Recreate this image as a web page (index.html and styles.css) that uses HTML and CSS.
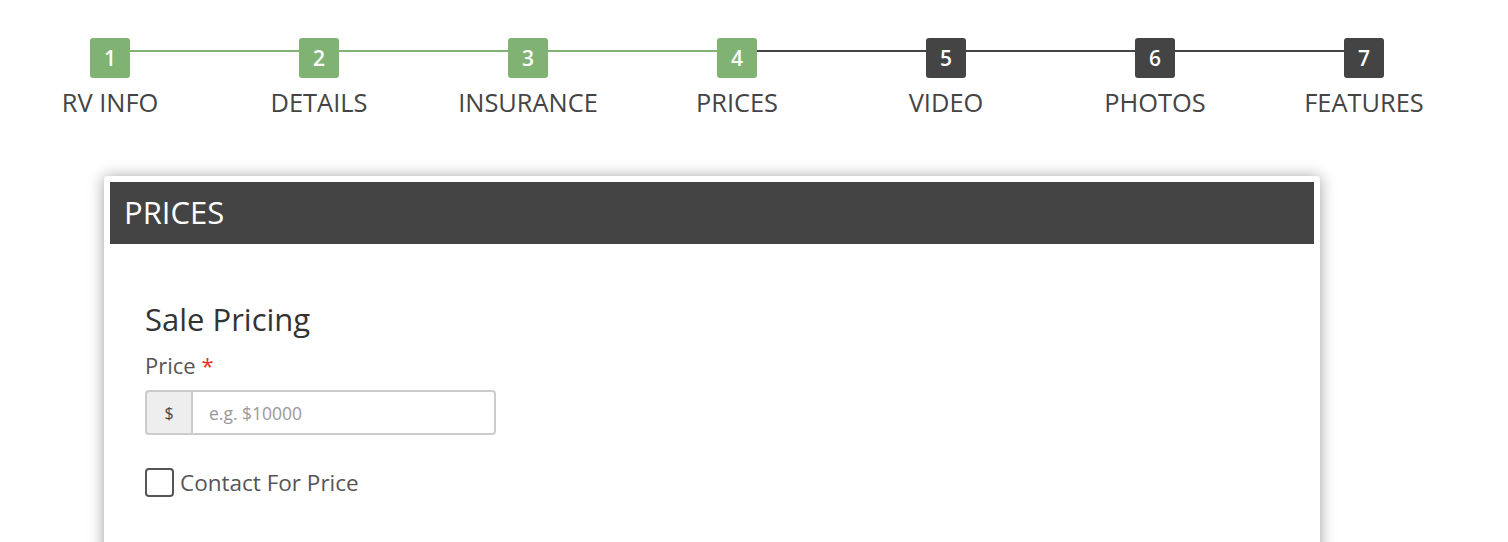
FILE: index.html
```html
<!DOCTYPE html>
<html>
<head>
<meta charset="utf-8">
<link rel="stylesheet" href="styles.css">
</head>
<body>
<div class="steps">
  <div class="step done"><div class="num">1</div><div class="label">RV INFO</div></div>
  <div class="step done"><div class="num">2</div><div class="label">DETAILS</div></div>
  <div class="step done"><div class="num">3</div><div class="label">INSURANCE</div></div>
  <div class="step done current"><div class="num">4</div><div class="label">PRICES</div></div>
  <div class="step"><div class="num">5</div><div class="label">VIDEO</div></div>
  <div class="step"><div class="num">6</div><div class="label">PHOTOS</div></div>
  <div class="step last"><div class="num">7</div><div class="label">FEATURES</div></div>
</div>
<div class="card">
  <div class="card-header">PRICES</div>
  <div class="card-body">
    <h2 class="section-title">Sale Pricing</h2>
    <label class="field-label">Price <span class="req">*</span></label>
    <div class="input-group">
      <span class="addon">$</span>
      <input class="input" type="text" placeholder="e.g. $10000">
    </div>
    <label class="check">
      <span class="box"></span>
      <span class="check-text">Contact For Price</span>
    </label>
  </div>
</div>
</body>
</html>
```
FILE: styles.css
```css
html, body {
  margin: 0;
  padding: 0;
  background: #fff;
  font-family: "Open Sans", "Noto Sans", sans-serif;
  color: #444;
}
.steps {
  display: flex;
  margin: 38px 0 0 5.5px;
  width: 1463px;
}
.step {
  flex: 1 1 0;
  display: flex;
  flex-direction: column;
  align-items: center;
  position: relative;
}
.step::after {
  content: "";
  position: absolute;
  left: 50%;
  width: 100%;
  top: 12px;
  height: 2px;
  background: #444;
  z-index: 0;
}
.step.done::after { background: #7fb273; }
.step.current::after { background: #444; }
.step.last::after { display: none; }
.num {
  position: relative;
  z-index: 1;
  width: 40px;
  height: 40px;
  border-radius: 3px;
  background: #444;
  color: #fff;
  font-size: 21px;
  line-height: 40px;
  text-align: center;
  font-weight: 600;
}
.step.done .num { background: #80b273; }
.label {
  margin-top: 6px;
  font-size: 25.4px;
  line-height: 36px;
  color: #444;
}
.card {
  margin: 56px 0 0 104px;
  width: 1216px;
  background: #fff;
  border-radius: 4px;
  padding: 6px;
  box-sizing: border-box;
  box-shadow: 0 1px 16px rgba(0,0,0,0.38);
  height: 400px;
}
.card-header {
  background: #444;
  color: #fff;
  height: 62px;
  line-height: 60px;
  padding-left: 14px;
  font-size: 31px;
}
.card-body {
  padding: 55px 35px 0;
}
.section-title {
  margin: 0;
  font-weight: 400;
  font-size: 31px;
  line-height: 40px;
  color: #333;
}
.field-label {
  display: block;
  margin-top: 11px;
  font-size: 22px;
  line-height: 30px;
  color: #555;
}
.req { color: #e53323; }
.input-group {
  display: flex;
  margin-top: 10px;
  width: 351px;
  height: 45px;
}
.addon {
  width: 46px;
  box-sizing: border-box;
  background: #eee;
  border: 2px solid #ccc;
  border-right: none;
  border-radius: 4px 0 0 4px;
  display: flex;
  align-items: center;
  justify-content: center;
  font-size: 16px;
  font-weight: 400;
  color: #444;
}
.input {
  flex: 1;
  box-sizing: border-box;
  border: 2px solid #ccc;
  border-radius: 0 4px 4px 0;
  padding: 0 16px;
  font-family: inherit;
  font-size: 17.5px;
  color: #333;
  outline: none;
}
.input::placeholder { color: #999; }
.check {
  display: flex;
  align-items: center;
  margin-top: 32px;
}
.box {
  width: 29px;
  height: 29px;
  box-sizing: border-box;
  border: 2px solid #555;
  border-radius: 4px;
}
.check-text {
  margin-left: 6px;
  font-size: 22.5px;
  color: #555;
}
```
